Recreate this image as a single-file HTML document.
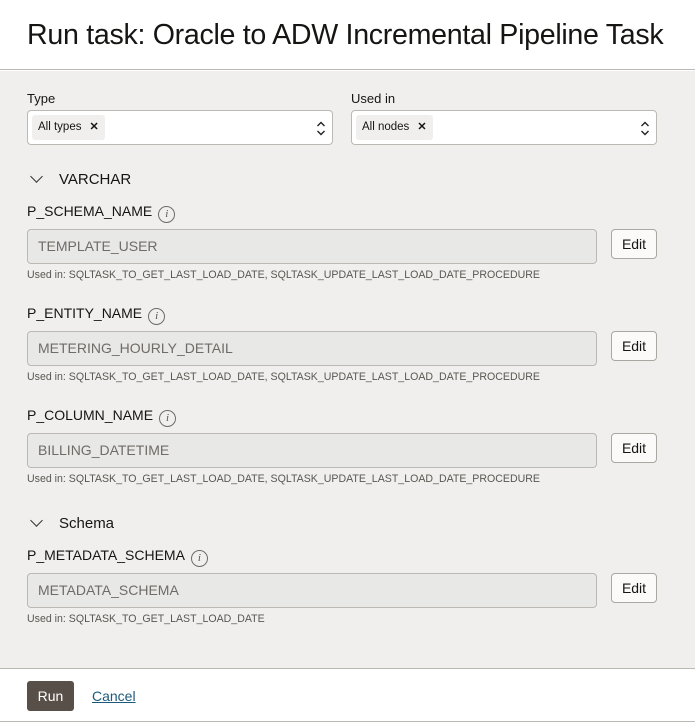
<!DOCTYPE html>
<html><head><meta charset="utf-8"><style>
*{box-sizing:border-box;margin:0;padding:0}
body{width:695px;height:726px;background:#fff;font-family:"Liberation Sans",Arial,sans-serif;color:#161513;position:relative;overflow:hidden}
.a{position:absolute}
.hdr{left:0;top:0;width:695px;height:70px;background:#fff;border-bottom:1px solid #bcb8b3}
.title{left:27px;top:19px;font-size:28.6px;white-space:nowrap;letter-spacing:-0.3px}
.body{left:0;top:71px;width:695px;height:598px;background:#f1efed;border-bottom:1px solid #bcb8b3}
.lbl{font-size:13px}
.sel{height:35px;background:#fff;border:1px solid #bcb8b3;border-radius:4px}
.chip{left:4px;top:4px;height:25px;background:#f1efed;border-radius:3px;font-size:11.5px;line-height:25px;padding:0 6px}
.chip b{font-weight:bold;margin-left:8px;font-size:11px}
.inp{left:27px;width:570px;height:35px;background:#e8e8e7;border:1px solid #bcb8b3;border-radius:4px;font-size:14px;color:#6f6b67;line-height:33px;padding-left:10px}
.edit{left:611px;width:46px;height:30px;background:#fbfaf9;border:1px solid #aaa6a1;border-radius:4px;font-size:14px;text-align:center;line-height:28px}
.name{left:27px;font-size:14px}
.info{display:inline-block;width:17px;height:17px;border:1px solid #6f6b67;border-radius:50%;font-family:"Liberation Serif",serif;font-style:italic;font-size:11px;text-align:center;line-height:15px;color:#555;margin-left:6px;vertical-align:-1px}
.used{left:27px;font-size:10.6px;color:#5a5652}
.grp{left:59px;font-size:15px}
.chev{left:32px;width:9px;height:9px;border-right:1.3px solid #333;border-bottom:1.3px solid #333;transform:rotate(45deg)}
</style></head><body>
<div class="a hdr"></div>
<div class="a title">Run task: Oracle to ADW Incremental Pipeline Task</div>
<div class="a body"></div>

<div class="a lbl" style="left:27px;top:91px">Type</div>
<div class="a sel" style="left:27px;top:110px;width:306px"><div class="a chip">All types<b>✕</b></div>
<svg class="a" style="right:6px;top:10px" width="10" height="15" viewBox="0 0 10 15"><path d="M1.5 5 5 1.5 8.5 5M1.5 10 5 13.5 8.5 10" fill="none" stroke="#222" stroke-width="1.4"/></svg></div>
<div class="a lbl" style="left:351px;top:91px">Used in</div>
<div class="a sel" style="left:351px;top:110px;width:306px"><div class="a chip">All nodes<b>✕</b></div>
<svg class="a" style="right:6px;top:10px" width="10" height="15" viewBox="0 0 10 15"><path d="M1.5 5 5 1.5 8.5 5M1.5 10 5 13.5 8.5 10" fill="none" stroke="#222" stroke-width="1.4"/></svg></div>

<div class="a chev" style="top:172px"></div>
<div class="a grp" style="top:171px">VARCHAR</div>

<div class="a name" style="top:203px">P_SCHEMA_NAME<span class="info">i</span></div>
<div class="a inp" style="top:229px">TEMPLATE_USER</div>
<div class="a edit" style="top:229px">Edit</div>
<div class="a used" style="top:269px">Used in: SQLTASK_TO_GET_LAST_LOAD_DATE, SQLTASK_UPDATE_LAST_LOAD_DATE_PROCEDURE</div>

<div class="a name" style="top:305px">P_ENTITY_NAME<span class="info">i</span></div>
<div class="a inp" style="top:331px">METERING_HOURLY_DETAIL</div>
<div class="a edit" style="top:331px">Edit</div>
<div class="a used" style="top:371px">Used in: SQLTASK_TO_GET_LAST_LOAD_DATE, SQLTASK_UPDATE_LAST_LOAD_DATE_PROCEDURE</div>

<div class="a name" style="top:407px">P_COLUMN_NAME<span class="info">i</span></div>
<div class="a inp" style="top:433px">BILLING_DATETIME</div>
<div class="a edit" style="top:433px">Edit</div>
<div class="a used" style="top:473px">Used in: SQLTASK_TO_GET_LAST_LOAD_DATE, SQLTASK_UPDATE_LAST_LOAD_DATE_PROCEDURE</div>

<div class="a chev" style="top:516px"></div>
<div class="a grp" style="top:515px">Schema</div>

<div class="a name" style="top:547px">P_METADATA_SCHEMA<span class="info">i</span></div>
<div class="a inp" style="top:573px">METADATA_SCHEMA</div>
<div class="a edit" style="top:573px">Edit</div>
<div class="a used" style="top:613px">Used in: SQLTASK_TO_GET_LAST_LOAD_DATE</div>

<div class="a" style="left:27px;top:681px;width:47px;height:30px;background:#585048;border-radius:3px;color:#fff;font-size:14px;text-align:center;line-height:30px">Run</div>
<div class="a" style="left:92px;top:688px;font-size:14px;color:#1c5a7d;text-decoration:underline">Cancel</div>
<div class="a" style="left:0;top:721px;width:695px;height:1px;background:#bcb8b3"></div>
</body></html>
